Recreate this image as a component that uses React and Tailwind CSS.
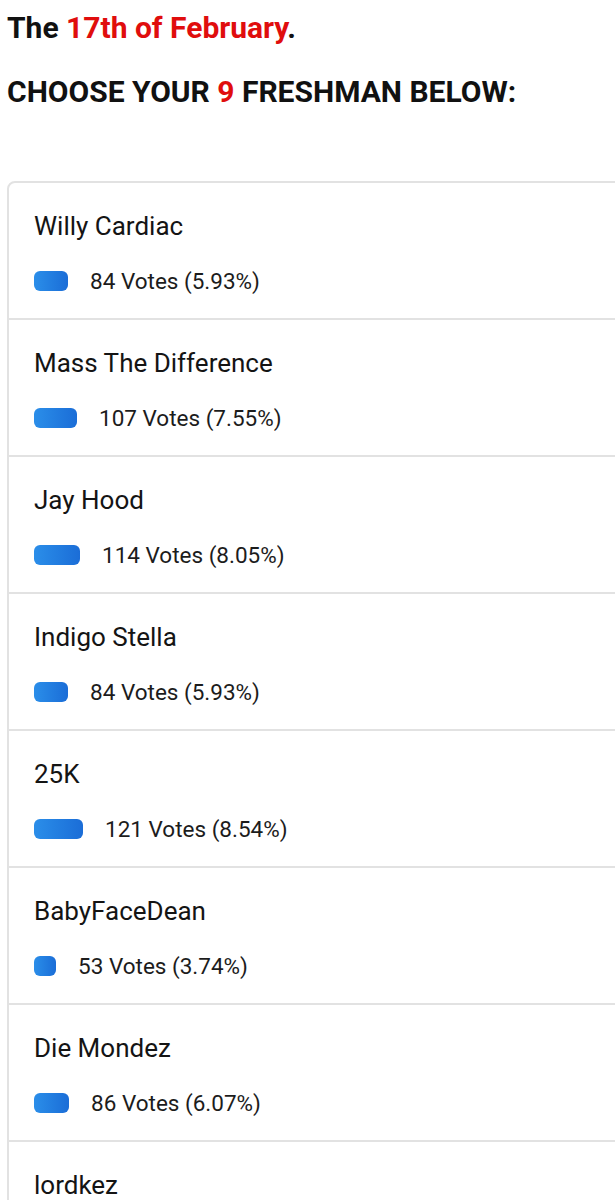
import React from 'react';

const nominees = [
  { name: 'Willy Cardiac', votes: 84, pct: '5.93' },
  { name: 'Mass The Difference', votes: 107, pct: '7.55' },
  { name: 'Jay Hood', votes: 114, pct: '8.05' },
  { name: 'Indigo Stella', votes: 84, pct: '5.93' },
  { name: '25K', votes: 121, pct: '8.54' },
  { name: 'BabyFaceDean', votes: 53, pct: '3.74' },
  { name: 'Die Mondez', votes: 86, pct: '6.07' },
  { name: 'lordkez', votes: 92, pct: '6.49' },
];

const App = () => {
  return (
    <div className="w-[615px] h-[1200px] overflow-hidden bg-white text-[#111] font-['Roboto',sans-serif]">
      <div className="px-[7px] pt-[10px]">
        <p className="text-[30px] leading-[36px] font-bold">
          The <span className="text-[#e00d0d]">17th of February</span>.
        </p>
        <p className="mt-[28px] text-[30px] leading-[36px] font-bold">
          CHOOSE YOUR <span className="text-[#e00d0d]">9</span> FRESHMAN BELOW:
        </p>
      </div>

      <div className="ml-[7px] mt-[71px] w-[660px] border-2 border-[#e2e2e2] rounded-[8px]">
        {nominees.map((n) => (
          <div key={n.name} className="border-b-2 border-[#e2e2e2] pl-[25px] pt-[28px] pb-[23px]">
            <div className="text-[26px] leading-[30px] text-[#141414]">{n.name}</div>
            <div className="mt-[26px] h-[28px] flex items-center gap-[22px]">
              <div
                className="h-[20px] rounded-[6px] bg-gradient-to-r from-[#2b8ee9] to-[#1b6dd7]"
                style={{ width: `${Math.round(parseFloat(n.pct) * 5.75)}px` }}
              />
              <span className="text-[22.5px] leading-[28px] text-[#1c1c1c]">
                {n.votes} Votes ({n.pct}%)
              </span>
            </div>
          </div>
        ))}
      </div>
    </div>
  );
};

export default App;
